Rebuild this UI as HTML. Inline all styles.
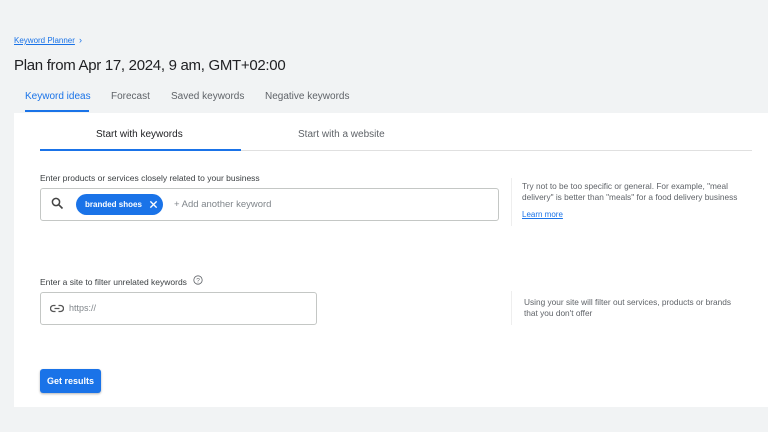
<!DOCTYPE html>
<html><head><style>
*{margin:0;padding:0;box-sizing:border-box}
body{width:768px;height:432px;background:#f1f3f4;font-family:"Liberation Sans",Arial,sans-serif;position:relative;overflow:hidden;color:#3c4043}
.a{position:absolute;white-space:nowrap}
</style></head><body>
<div class="a" style="left:14px;top:36px;font-size:8px;color:#1a73e8;text-decoration:underline">Keyword Planner</div>
<div class="a" style="left:79px;top:35px;font-size:9px;color:#1a73e8">›</div>
<div class="a" style="left:14px;top:57px;font-size:15px;color:#202124;letter-spacing:-0.3px">Plan from Apr 17, 2024, 9 am, GMT+02:00</div>
<div class="a" style="left:25px;top:91px;font-size:10px;color:#1a73e8">Keyword ideas</div>
<div class="a" style="left:111px;top:91px;font-size:10px;color:#5f6368">Forecast</div>
<div class="a" style="left:171px;top:91px;font-size:10px;color:#5f6368">Saved keywords</div>
<div class="a" style="left:265px;top:91px;font-size:10px;color:#5f6368">Negative keywords</div>
<div class="a" style="left:25px;top:110px;width:64px;height:2px;background:#1a73e8"></div>
<div class="a" style="left:14px;top:113px;width:754px;height:294px;background:#fff"></div>
<div class="a" style="left:96px;top:129px;font-size:10px;color:#202124">Start with keywords</div>
<div class="a" style="left:298px;top:129px;font-size:10px;color:#5f6368">Start with a website</div>
<div class="a" style="left:40px;top:150px;width:712px;height:1px;background:#e0e0e0"></div>
<div class="a" style="left:40px;top:149px;width:201px;height:2px;background:#1a73e8"></div>
<div class="a" style="left:40px;top:173px;font-size:8.5px;color:#3c4043">Enter products or services closely related to your business</div>
<div class="a" style="left:40px;top:188px;width:459px;height:33px;border:1px solid #c4c7c5;border-radius:3px"></div>
<svg class="a" style="left:51px;top:197px" width="13" height="13" viewBox="0 0 13 13"><circle cx="5" cy="5" r="3.6" fill="none" stroke="#444" stroke-width="1.5"/><path d="M7.6 7.6L11.5 11.5" stroke="#444" stroke-width="1.6"/></svg>
<div class="a" style="left:76px;top:194px;width:87px;height:21px;border-radius:11px;background:#1a73e8;color:#fff;font-size:8px;font-weight:bold;padding:6px 0 0 9px">branded shoes</div>
<svg class="a" style="left:149px;top:200px" width="9" height="9" viewBox="0 0 10 10"><path d="M1.5 1.5L8.5 8.5M8.5 1.5L1.5 8.5" stroke="#fff" stroke-width="1.5"/></svg>
<div class="a" style="left:174px;top:199px;font-size:9.5px;color:#80868b">+ Add another keyword</div>
<div class="a" style="left:511px;top:178px;width:1px;height:48px;background:#eee"></div>
<div class="a" style="left:522px;top:181px;font-size:8.3px;color:#5f6368;line-height:11px">Try not to be too specific or general. For example, "meal<br>delivery" is better than "meals" for a food delivery business</div>
<div class="a" style="left:522px;top:210px;font-size:8px;color:#1a73e8;text-decoration:underline">Learn more</div>
<div class="a" style="left:40px;top:277px;font-size:8.5px;color:#3c4043">Enter a site to filter unrelated keywords</div>
<svg class="a" style="left:193px;top:275px" width="10" height="10" viewBox="0 0 10 10"><circle cx="5" cy="5" r="4.2" fill="none" stroke="#5f6368" stroke-width=".8"/><text x="5" y="7.4" font-size="6.5" text-anchor="middle" fill="#5f6368" font-family="Liberation Sans">?</text></svg>
<div class="a" style="left:40px;top:292px;width:277px;height:33px;border:1px solid #c4c7c5;border-radius:3px"></div>
<svg class="a" style="left:50px;top:304px" width="14" height="9" viewBox="0 0 14 9"><path d="M5.5 1.5H3.5a3 3 0 000 6h2M8.5 1.5h2a3 3 0 010 6h-2M4.5 4.5h5" fill="none" stroke="#555" stroke-width="1.3"/></svg>
<div class="a" style="left:69px;top:303px;font-size:9px;color:#80868b">https://</div>
<div class="a" style="left:511px;top:291px;width:1px;height:34px;background:#eee"></div>
<div class="a" style="left:524px;top:297px;font-size:8.3px;color:#5f6368;line-height:11px">Using your site will filter out services, products or brands<br>that you don't offer</div>
<div class="a" style="left:40px;top:369px;width:61px;height:24px;border-radius:3px;background:#1a73e8;color:#fff;font-size:9px;font-weight:bold;text-align:center;line-height:24px;box-shadow:0 1px 2px rgba(0,0,0,.3)">Get results</div>
</body></html>
